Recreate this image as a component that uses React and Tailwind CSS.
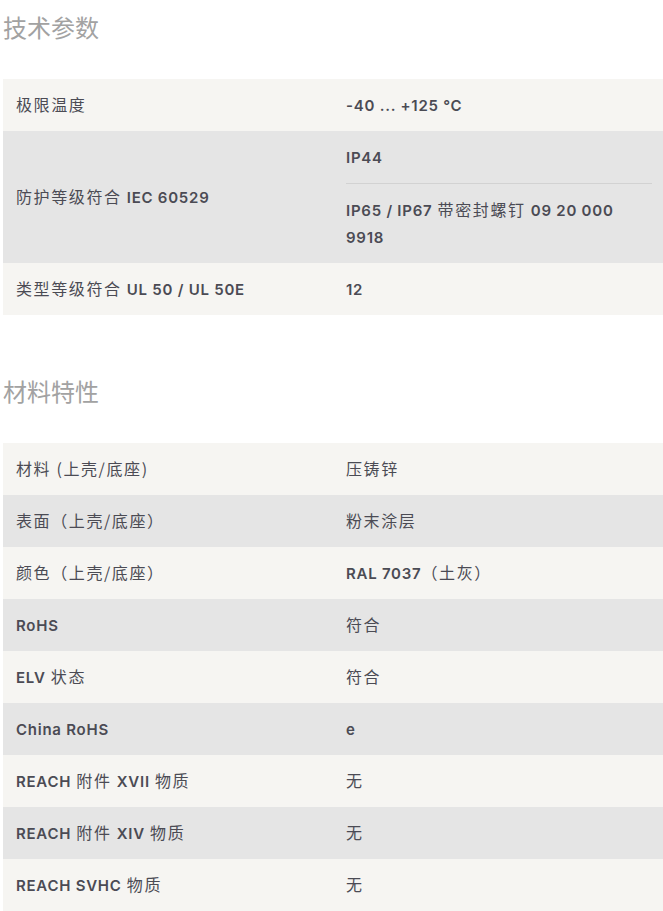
// App.jsx — technical data sheet (技术参数 / 材料特性) as two striped tables.

const CJK = "font-['Noto_Sans_CJK_SC',sans-serif] font-normal tracking-[1.6px] leading-[20px]";
const LAT = "font-['Inter','Noto_Sans_CJK_SC',sans-serif] font-semibold text-[15px] tracking-[0.75px] leading-[20px]";

// Latin runs render semibold, Chinese runs render regular
function T({ parts }) {
  return (
    <>
      {parts.map((p, i) =>
        typeof p === "string" ? (
          <span key={i} className={CJK}>{p}</span>
        ) : (
          <span key={i} className={LAT}>{p.b}</span>
        )
      )}
    </>
  );
}

const b = (s) => ({ b: s });

function Row({ label, children, shade }) {
  return (
    <div className={`grid grid-cols-[343px_1fr] ${shade ? "bg-[#e5e5e5]" : "bg-[#f6f5f2]"}`}>
      <div className="pl-[13px] flex items-center py-[12.5px]">
        <div><T parts={label} /></div>
      </div>
      <div className="pr-[11px]">{children}</div>
    </div>
  );
}

function Cell({ parts }) {
  return (
    <div className="py-[12.5px]">
      <T parts={parts} />
    </div>
  );
}

const tech = [
  { label: ["极限温度"], value: [b("-40 ... +125 °C")] },
  { label: ["防护等级符合 ", b("IEC 60529")], multi: true },
  { label: ["类型等级符合 ", b("UL 50 / UL 50E")], value: [b("12")] },
];

const material = [
  { label: ["材料 (上壳/底座)"], value: ["压铸锌"] },
  { label: ["表面（上壳/底座）"], value: ["粉末涂层"] },
  { label: ["颜色（上壳/底座）"], value: [b("RAL 7037"), "（土灰）"] },
  { label: [b("RoHS")], value: ["符合"] },
  { label: [b("ELV"), " 状态"], value: ["符合"] },
  { label: [b("China RoHS")], value: [b("e")] },
  { label: [b("REACH"), " 附件 ", b("XVII"), " 物质"], value: ["无"] },
  { label: [b("REACH"), " 附件 ", b("XIV"), " 物质"], value: ["无"] },
  { label: [b("REACH SVHC"), " 物质"], value: ["无"] },
];

export default function App() {
  return (
    <div className="bg-white w-[663px] min-h-[911px] pt-[11px] pl-[3px] text-[16px] leading-[27px] text-[#4b4b54]">
      {/* 技术参数 */}
      <section>
        <h2 className="font-['Noto_Sans_CJK_SC',sans-serif] text-[24px] leading-[32px] text-[#a2a2a2] font-normal">技术参数</h2>
        <div className="mt-[36px]">
          {tech.map((r, i) => (
            <Row key={i} label={r.label} shade={i % 2 === 1}>
              {r.multi ? (
                <>
                  <Cell parts={[b("IP44")]} />
                  <div className="border-t border-[#d2d2d2]" />
                  <Cell parts={[b("IP65 / IP67"), " 带密封螺钉 ", b("09 20 000"), " ", b("9918")]} />
                </>
              ) : (
                <Cell parts={r.value} />
              )}
            </Row>
          ))}
        </div>
      </section>

      {/* 材料特性 */}
      <section className="mt-[60px]">
        <h2 className="font-['Noto_Sans_CJK_SC',sans-serif] text-[24px] leading-[32px] text-[#a2a2a2] font-normal">材料特性</h2>
        <div className="mt-[36px]">
          {material.map((r, i) => (
            <Row key={i} label={r.label} shade={i % 2 === 1}>
              <Cell parts={r.value} />
            </Row>
          ))}
        </div>
      </section>
    </div>
  );
}
